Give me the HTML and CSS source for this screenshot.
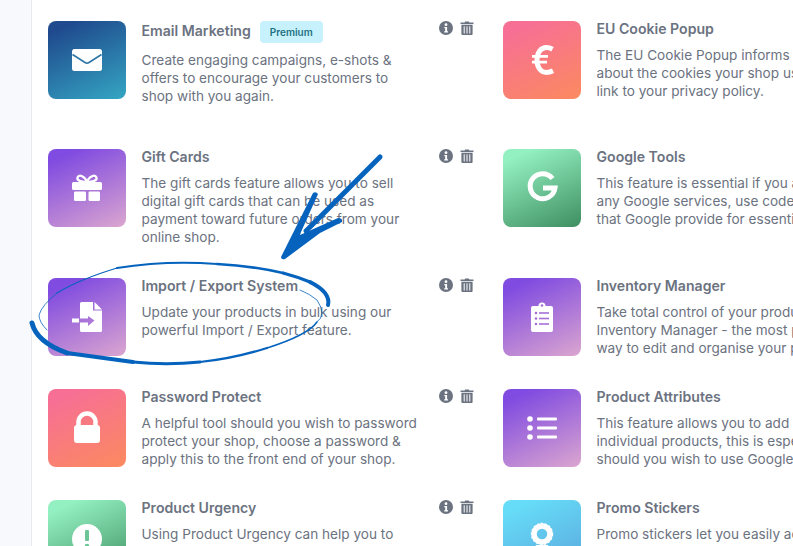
FILE: index.html
```html
<!DOCTYPE html>
<html lang="en">
<head>
<meta charset="utf-8">
<title>Features</title>
<link rel="stylesheet" href="styles.css">
</head>
<body>
<svg width="0" height="0" class="defs">
  <symbol id="info" viewBox="0 0 14 14"><circle cx="7" cy="7" r="7" fill="currentColor"/><circle cx="7" cy="3.700" r="1.400" fill="#fff"/><path d="M5.300 6h2.800v4.300H9v1.200H5.200v-1.200h1V7.200H5.300z" fill="#fff"/></symbol>
  <symbol id="trash" viewBox="0 0 14 14"><path d="M0.500 1.600H4.600L5.200 .4H8.800L9.400 1.600H13.500V3H.5z" fill="currentColor"/><path d="M1.400 3.800H12.600V13a1 1 0 0 1-1 1H2.400a1 1 0 0 1-1-1z" fill="currentColor"/><path d="M4.200 5.300V12.500M7 5.300V12.500M9.800 5.300V12.500" stroke="#fff" stroke-width="1" fill="none"/></symbol>
</svg>
<div class="layout">
  <aside class="rail"></aside>
  <main class="content">
    <section class="grid">

      <article class="item">
        <div class="tile blue"><svg viewBox="0 0 78 78"><rect x="24" y="28" width="30" height="22" rx="2.500" fill="#fff"/><path d="M24.500 33.500L37 41.500Q39 42.800 41 41.500L53.500 33.500" fill="none" stroke="#2d78a6" stroke-width="1.600"/></svg></div>
        <div class="body">
          <h3 class="title has-badge">Email Marketing <span class="badge">Premium</span></h3>
          <p class="desc">Create engaging campaigns, e-shots &amp; offers to encourage your customers to shop with you again.</p>
        </div>
        <div class="actions"><svg class="act"><use href="#info"/></svg><svg class="act"><use href="#trash"/></svg></div>
      </article>

      <article class="item">
        <div class="tile pink"><svg viewBox="0 0 78 78"><path d="M49.500 28.200Q46.500 26.500 43.500 26.500C37.500 26.500 34 32 34 39S37.500 51.500 43.500 51.500Q46.500 51.500 50 49.800" fill="none" stroke="#fff" stroke-width="5"/><path d="M29 35.400H45M29 41.200H44" fill="none" stroke="#fff" stroke-width="2.800"/></svg></div>
        <div class="body">
          <h3 class="title">EU Cookie Popup</h3>
          <p class="desc">The EU Cookie Popup informs visitors<br>about the cookies your shop uses with a<br>link to your privacy policy.</p>
        </div>
        <div class="actions"><svg class="act"><use href="#info"/></svg><svg class="act"><use href="#trash"/></svg></div>
      </article>

      <article class="item">
        <div class="tile purple"><svg viewBox="0 0 78 78"><rect x="24" y="33" width="30" height="8" rx="1.500" fill="#fff"/><rect x="26" y="42.500" width="12" height="9.500" rx="1.200" fill="#fff"/><rect x="40.500" y="42.500" width="11.500" height="9.500" rx="1.200" fill="#fff"/><path d="M39 33C37 27 31 25 29.500 28.500C28.500 31.500 33 33 39 33C45 33 49.500 31.500 48.500 28.500C47 25 41 27 39 33" fill="none" stroke="#fff" stroke-width="2.200"/></svg></div>
        <div class="body">
          <h3 class="title">Gift Cards</h3>
          <p class="desc">The gift cards feature allows you to sell digital gift cards that can be used as payment toward future orders from your online shop.</p>
        </div>
        <div class="actions"><svg class="act"><use href="#info"/></svg><svg class="act"><use href="#trash"/></svg></div>
      </article>

      <article class="item">
        <div class="tile green"><svg viewBox="0 0 78 78"><path d="M49.500 29.500A12.500 12.500 0 1 0 52 39H40" fill="none" stroke="#fff" stroke-width="5"/></svg></div>
        <div class="body">
          <h3 class="title">Google Tools</h3>
          <p class="desc">This feature is essential if you are using<br>any Google services, use code snippets<br>that Google provide for essential tracking.</p>
        </div>
        <div class="actions"><svg class="act"><use href="#info"/></svg><svg class="act"><use href="#trash"/></svg></div>
      </article>

      <article class="item">
        <div class="tile purple"><svg viewBox="0 0 78 78"><path d="M33.500 24H45V32.500H54V52.500A1.500 1.500 0 0 1 52.500 54H33.500A1.500 1.500 0 0 1 32 52.500V44.500H40V48L46.500 42.500L40 38V40.500H32V25.500A1.500 1.500 0 0 1 33.500 24Z" fill="#fff"/><path d="M46.500 24L54 31.500H46.500Z" fill="#fff"/><rect x="24" y="40.500" width="7" height="4" fill="#fff"/></svg></div>
        <div class="body">
          <h3 class="title">Import / Export System</h3>
          <p class="desc">Update your products in bulk using our powerful Import / Export feature.</p>
        </div>
        <div class="actions"><svg class="act"><use href="#info"/></svg><svg class="act"><use href="#trash"/></svg></div>
      </article>

      <article class="item">
        <div class="tile purple"><svg viewBox="0 0 78 78"><path d="M30 28H35.500A3.500 3.500 0 0 1 42.500 28H48A2 2 0 0 1 50 30V52A2 2 0 0 1 48 54H30A2 2 0 0 1 28 52V30A2 2 0 0 1 30 28Z" fill="#fff"/><circle cx="39" cy="27.500" r="1.300" fill="#a66fd6"/><g fill="#a66fd6"><circle cx="33" cy="35" r="1.300"/><circle cx="33" cy="40.500" r="1.300"/><circle cx="33" cy="46" r="1.300"/><rect x="36" y="34.200" width="10" height="1.600"/><rect x="36" y="39.700" width="10" height="1.600"/><rect x="36" y="45.200" width="10" height="1.600"/></g></svg></div>
        <div class="body">
          <h3 class="title">Inventory Manager</h3>
          <p class="desc">Take total control of your products with<br>Inventory Manager - the most powerful<br>way to edit and organise your products.</p>
        </div>
        <div class="actions"><svg class="act"><use href="#info"/></svg><svg class="act"><use href="#trash"/></svg></div>
      </article>

      <article class="item">
        <div class="tile pink"><svg viewBox="0 0 78 78"><path d="M30.500 37V33A8.500 8.500 0 0 1 47.500 33V37" fill="none" stroke="#fff" stroke-width="4.500"/><rect x="26" y="36" width="26" height="18" rx="3" fill="#fff"/></svg></div>
        <div class="body">
          <h3 class="title">Password Protect</h3>
          <p class="desc">A helpful tool should you wish to password protect your shop, choose a password &amp; apply this to the front end of your shop.</p>
        </div>
        <div class="actions"><svg class="act"><use href="#info"/></svg><svg class="act"><use href="#trash"/></svg></div>
      </article>

      <article class="item">
        <div class="tile purple"><svg viewBox="0 0 78 78"><g fill="#fff"><circle cx="27" cy="30" r="2.800"/><circle cx="27" cy="39" r="2.800"/><circle cx="27" cy="48" r="2.800"/><rect x="34" y="28.500" width="20" height="3" rx="1"/><rect x="34" y="37.500" width="20" height="3" rx="1"/><rect x="34" y="46.500" width="20" height="3" rx="1"/></g></svg></div>
        <div class="body">
          <h3 class="title">Product Attributes</h3>
          <p class="desc">This feature allows you to add labels to<br>individual products, this is especially handy<br>should you wish to use Google Shopping.</p>
        </div>
        <div class="actions"><svg class="act"><use href="#info"/></svg><svg class="act"><use href="#trash"/></svg></div>
      </article>

      <article class="item">
        <div class="tile green"><svg viewBox="0 0 78 78"><circle cx="39" cy="39" r="15" fill="#fff"/><rect x="37" y="30" width="4" height="11" rx="1" fill="#6cc596"/><circle cx="39" cy="46" r="2.300" fill="#6cc596"/></svg></div>
        <div class="body">
          <h3 class="title">Product Urgency</h3>
          <p class="desc">Using Product Urgency can help you to increase sales across your online shop.</p>
        </div>
        <div class="actions"><svg class="act"><use href="#info"/></svg><svg class="act"><use href="#trash"/></svg></div>
      </article>

      <article class="item">
        <div class="tile cyan"><svg viewBox="0 0 78 78"><circle cx="39" cy="34" r="8" fill="none" stroke="#fff" stroke-width="5.500"/><circle cx="39" cy="34" r="10.500" fill="none" stroke="#fff" stroke-width="1.400" stroke-dasharray="2.200 1.800"/><path d="M33 45L29 54H35L39 49L43 54H49L45 45Z" fill="#fff"/></svg></div>
        <div class="body">
          <h3 class="title">Promo Stickers</h3>
          <p class="desc">Promo stickers let you easily add eye-catching labels to your products.</p>
        </div>
        <div class="actions"><svg class="act"><use href="#info"/></svg><svg class="act"><use href="#trash"/></svg></div>
      </article>

    </section>
  </main>
</div>

<svg class="scribble" viewBox="0 0 793 546" aria-hidden="true">
  <path class="ink-fill" d="M281 257L313 193Q316 191 318 194L301 232L300 235L338 218Q343 218 342 222L320 233L285 259Q281 260 281 257Z"/>
  <path class="ink w5" d="M380 157L306 231"/>
  <path class="ink w5" d="M32 323Q36.500 342 67 353"/>
  <path class="ink w4" d="M67 353Q100 357.500 133 362"/>
  <path class="ink w3" d="M133 362Q166.500 365.500 200 362"/>
  <path class="ink w22" d="M200 362Q233.500 358.500 267 348"/>
  <path class="ink w15" d="M267 348Q308 335 317 322"/>
  <path class="ink w08" d="M317 322Q327 315 317 300Q310 294 300 290"/>
  <path class="ink w4" d="M328 305Q331 292.500 310 282"/>
  <path class="ink w3" d="M310 282Q298 277 283 273"/>
  <path class="ink w25" d="M283 273Q250 265.500 217 264"/>
  <path class="ink w2" d="M217 264Q167 260 117 268"/>
  <path class="ink w12" d="M117 268Q79 279.500 57 293"/>
  <path class="ink w08" d="M57 293Q42 305 39 315Q39 322 47 330"/>
</svg>
</body>
</html>
```
FILE: styles.css
```css
html, body {
  margin: 0;
  height: 100%;
  overflow: hidden;
  background: #fff;
}
body {
  position: relative;
  font-family: Inter, "Liberation Sans", sans-serif;
  color: #6b7280;
}
.defs { position: absolute; }
.layout {
  display: flex;
  min-height: 100%;
}
.rail {
  flex: 0 0 31px;
  background: #f8f9fc;
  border-right: 1px solid #e8eaef;
}
.content {
  padding: 21px 0 0 16px;
}
.grid {
  display: grid;
  grid-template-columns: 455px 455px;
  grid-template-rows: 128px 129px 111px 111px 111px;
}
.item {
  display: flex;
  align-items: flex-start;
}
.tile {
  flex: 0 0 78px;
  width: 78px;
  height: 78px;
  border-radius: 8px;
  margin-right: 15.500px;
}
.tile svg {
  display: block;
  width: 78px;
  height: 78px;
}
.blue { background: linear-gradient(155deg, #1f4b8e 12%, #35a6c3 100%); }
.purple { background: linear-gradient(155deg, #804be0 12%, #dba6cf 100%); }
.pink { background: linear-gradient(155deg, #f76f95 12%, #fb8a5f 100%); }
.green { background: linear-gradient(155deg, #93f0c1 12%, #3e8e60 100%); }
.cyan { background: linear-gradient(155deg, #66dcf8 12%, #5aa3da 100%); }
.body {
  flex: 0 0 280px;
  width: 280px;
}
.title {
  margin: 0 0 9px;
  font-size: 14.100px;
  line-height: 16px;
  font-weight: 600;
  color: #6b7280;
}
.title.has-badge {
  display: flex;
  align-items: flex-start;
  gap: 9px;
  height: 22px;
  line-height: 20px;
  margin-bottom: 8px;
}
.badge {
  display: inline-block;
  padding: 0 10px;
  height: 22px;
  line-height: 22px;
  border-radius: 4px;
  background: #c6f1fd;
  color: #1e7283;
  font-size: 10px;
  font-weight: 600;
}
.desc {
  margin: 0;
  font-size: 13.600px;
  line-height: 18px;
  color: #6b7280;
}
.actions {
  display: flex;
  gap: 7px;
  margin-left: 17px;
}
.act {
  width: 14px;
  height: 14px;
  color: #6b7280;
}
.scribble {
  position: absolute;
  left: 0;
  top: 0;
  width: 793px;
  height: 546px;
  pointer-events: none;
}
.ink-fill { fill: #0563bd; }
.ink {
  fill: none;
  stroke: #0563bd;
  stroke-linecap: round;
}
.w5 { stroke-width: 5px; }
.w4 { stroke-width: 4px; }
.w3 { stroke-width: 3px; }
.w25 { stroke-width: 2.500px; }
.w22 { stroke-width: 2.200px; }
.w2 { stroke-width: 2px; }
.w15 { stroke-width: 1.500px; }
.w12 { stroke-width: 1.200px; }
.w08 { stroke-width: .8px; }
```
